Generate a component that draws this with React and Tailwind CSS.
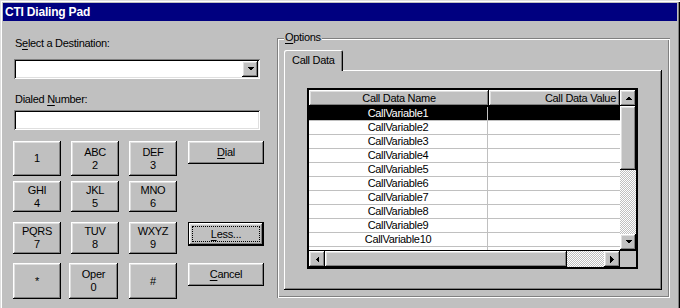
const raised = 'bg-[#c0c0c0] shadow-[inset_-1px_-1px_0_#000,inset_1px_1px_0_#fff,inset_-2px_-2px_0_#808080,inset_2px_2px_0_#dfdfdf]'
const sunken = 'bg-white shadow-[inset_1px_1px_0_#808080,inset_-1px_-1px_0_#fff,inset_2px_2px_0_#000,inset_-2px_-2px_0_#dfdfdf]'
const dither = 'bg-[repeating-conic-gradient(#c0c0c0_0_25%,#fff_0_50%)] [background-size:2px_2px]'

function Arrow({ dir }) {
  const pts = {
    up: '0,4 7,4 3.5,0.5',
    down: '0,0 7,0 3.5,3.5',
    left: '4,0 4,7 0.5,3.5',
    right: '0,0 0,7 3.5,3.5',
  }[dir]
  const vertical = dir === 'up' || dir === 'down'
  return (
    <svg width={vertical ? 7 : 4} height={vertical ? 4 : 7} viewBox={vertical ? '0 0 7 4' : '0 0 4 7'}>
      <polygon points={pts} fill="#000" shapeRendering="crispEdges" />
    </svg>
  )
}

function ScrollBtn({ dir }) {
  return (
    <div className={`w-[16px] h-[16px] shrink-0 flex items-center justify-center ${raised}`}>
      <Arrow dir={dir} />
    </div>
  )
}

function U({ children }) {
  return <span className="underline underline-offset-[2px]">{children}</span>
}

function Key({ top, bottom, className = '' }) {
  return (
    <div className={`w-[48px] flex flex-col items-center justify-center leading-[13px] ${raised} ${className}`}>
      {top && <span>{top}</span>}
      <span>{bottom}</span>
    </div>
  )
}

function PushBtn({ children, def }) {
  if (def) {
    return (
      <div className="w-[76px] h-[24px] border border-black">
        <div className={`w-full h-full p-[3px] ${raised}`}>
          <div className="w-full h-full border border-dotted border-black flex items-center justify-center">
            {children}
          </div>
        </div>
      </div>
    )
  }
  return (
    <div className={`w-[76px] h-[23px] flex items-center justify-center ${raised}`}>{children}</div>
  )
}

// last entry is the partly visible row under the 10th, empty in the reference
const rows = [...Array.from({ length: 10 }, (_, i) => `CallVariable${i + 1}`), '']

export default function App() {
  return (
    <div className="w-[680px] h-[308px] overflow-hidden bg-[#c0c0c0] px-[3px] pt-[3px] text-[11px] tracking-[-0.3px] text-black font-['Liberation_Sans',Arial,sans-serif] shadow-[inset_1px_1px_0_#dfdfdf,inset_2px_2px_0_#fff,inset_-1px_0_0_#000,inset_-2px_0_0_#808080]">
      <div className="h-[18px] bg-[#000080] text-white font-bold text-[12px] tracking-[-0.2px] leading-[18px] pl-[2px]">
        CTI Dialing Pad
      </div>

      <div className="flex pl-[11px]">
        <div className="w-[250px] shrink-0 flex flex-col">
          <div className="mt-[16px] leading-[13px] pl-px">S<U>e</U>lect a Destination:</div>
          <div className={`mt-[9px] w-[246px] h-[20px] p-[2px] flex justify-end ${sunken}`}>
            <div className={`w-[16px] h-[16px] flex items-center justify-center ${raised}`}>
              <Arrow dir="down" />
            </div>
          </div>
          <div className="mt-[14px] leading-[13px] pl-px">Dialed <U>N</U>umber:</div>
          <div className={`mt-[4px] w-[246px] h-[20px] ${sunken}`} />

          <div className="-ml-px mt-[11px] flex flex-col">
            <div className="flex items-start">
              <div className="flex gap-[10px] h-[35px]">
                <Key bottom="1" />
                <Key top="ABC" bottom="2" />
                <Key top="DEF" bottom="3" />
              </div>
              <div className="ml-[11px]"><PushBtn><span><U>D</U>ial</span></PushBtn></div>
            </div>
            <div className="flex items-start mt-[5px]">
              <div className="flex gap-[10px] h-[31px]">
                <Key top="GHI" bottom="4" />
                <Key top="JKL" bottom="5" />
                <Key top="MNO" bottom="6" />
              </div>
            </div>
            <div className="flex items-start mt-[10px]">
              <div className="flex gap-[10px] h-[32px]">
                <Key top="PQRS" bottom="7" />
                <Key top="TUV" bottom="8" />
                <Key top="WXYZ" bottom="9" />
              </div>
              <div className="ml-[11px]"><PushBtn def><span><U>L</U>ess...</span></PushBtn></div>
            </div>
            <div className="flex items-start mt-[9px]">
              <div className="flex h-[36px]">
                <Key bottom="*" />
                <Key top="Oper" bottom="0" className="ml-[8px] w-[49px]" />
                <Key bottom="#" className="ml-[11px]" />
              </div>
              <div className="ml-[11px]"><PushBtn><span><U>C</U>ancel</span></PushBtn></div>
            </div>
          </div>
        </div>

        <div className="relative ml-[13px] mt-[17px] w-[393px] h-[260px] px-[7px] pt-[12px] shadow-[inset_1px_1px_0_#808080,inset_-1px_-1px_0_#fff,inset_2px_2px_0_#fff,inset_-2px_-2px_0_#808080]">
          <div className="absolute left-[7px] -top-[7px] px-px bg-[#c0c0c0] leading-[13px]"><U>O</U>ptions</div>

          <div className="relative z-10 w-[59px] h-[21px] -mb-px bg-[#c0c0c0] rounded-tl-[2px] rounded-tr-[2px] shadow-[inset_1px_1px_0_#fff,inset_-1px_0_0_#000,inset_-2px_0_0_#808080] pl-[8px] pt-[4px] leading-[13px]">
            Call Data
          </div>

          <div className="w-[378px] h-[220px] pl-[23px] pt-[18px] bg-[#c0c0c0] shadow-[inset_-1px_-1px_0_#000,inset_1px_1px_0_#fff,inset_-2px_-2px_0_#808080]">
            <div className="w-[331px] h-[181px] border-2 border-black bg-white flex flex-col">
              <div className="flex h-[160px] overflow-hidden">
                <div className="w-[311px] flex flex-col overflow-hidden">
                  <div className="flex h-[17px] shrink-0 border-b border-black">
                    <div className={`w-[180px] flex items-center justify-center ${raised}`}>Call Data Name</div>
                    <div className={`flex-1 flex items-center justify-end pr-[4px] ${raised}`}>Call Data Value</div>
                  </div>
                  {rows.map((r, i) => (
                    <div key={i} className={`flex h-[14px] shrink-0 leading-[13px] border-b border-[#c0c0c0] ${i === 0 ? 'bg-black text-white' : ''}`}>
                      <div className="w-[179px] text-center border-r border-[#c0c0c0]">{r}</div>
                      <div className="flex-1" />
                    </div>
                  ))}
                </div>
                <div className="w-[16px] flex flex-col">
                  <ScrollBtn dir="up" />
                  <div className={`h-[64px] shrink-0 ${raised}`} />
                  <div className={`flex-1 ${dither}`} />
                  <ScrollBtn dir="down" />
                </div>
              </div>
              <div className="flex h-[17px] border-t border-black">
                <ScrollBtn dir="left" />
                <div className={`w-[242px] ${raised}`} />
                <div className={`w-[37px] ${dither}`} />
                <ScrollBtn dir="right" />
                <div className="flex-1 bg-[#c0c0c0]" />
              </div>
            </div>
          </div>
        </div>
      </div>
    </div>
  )
}
